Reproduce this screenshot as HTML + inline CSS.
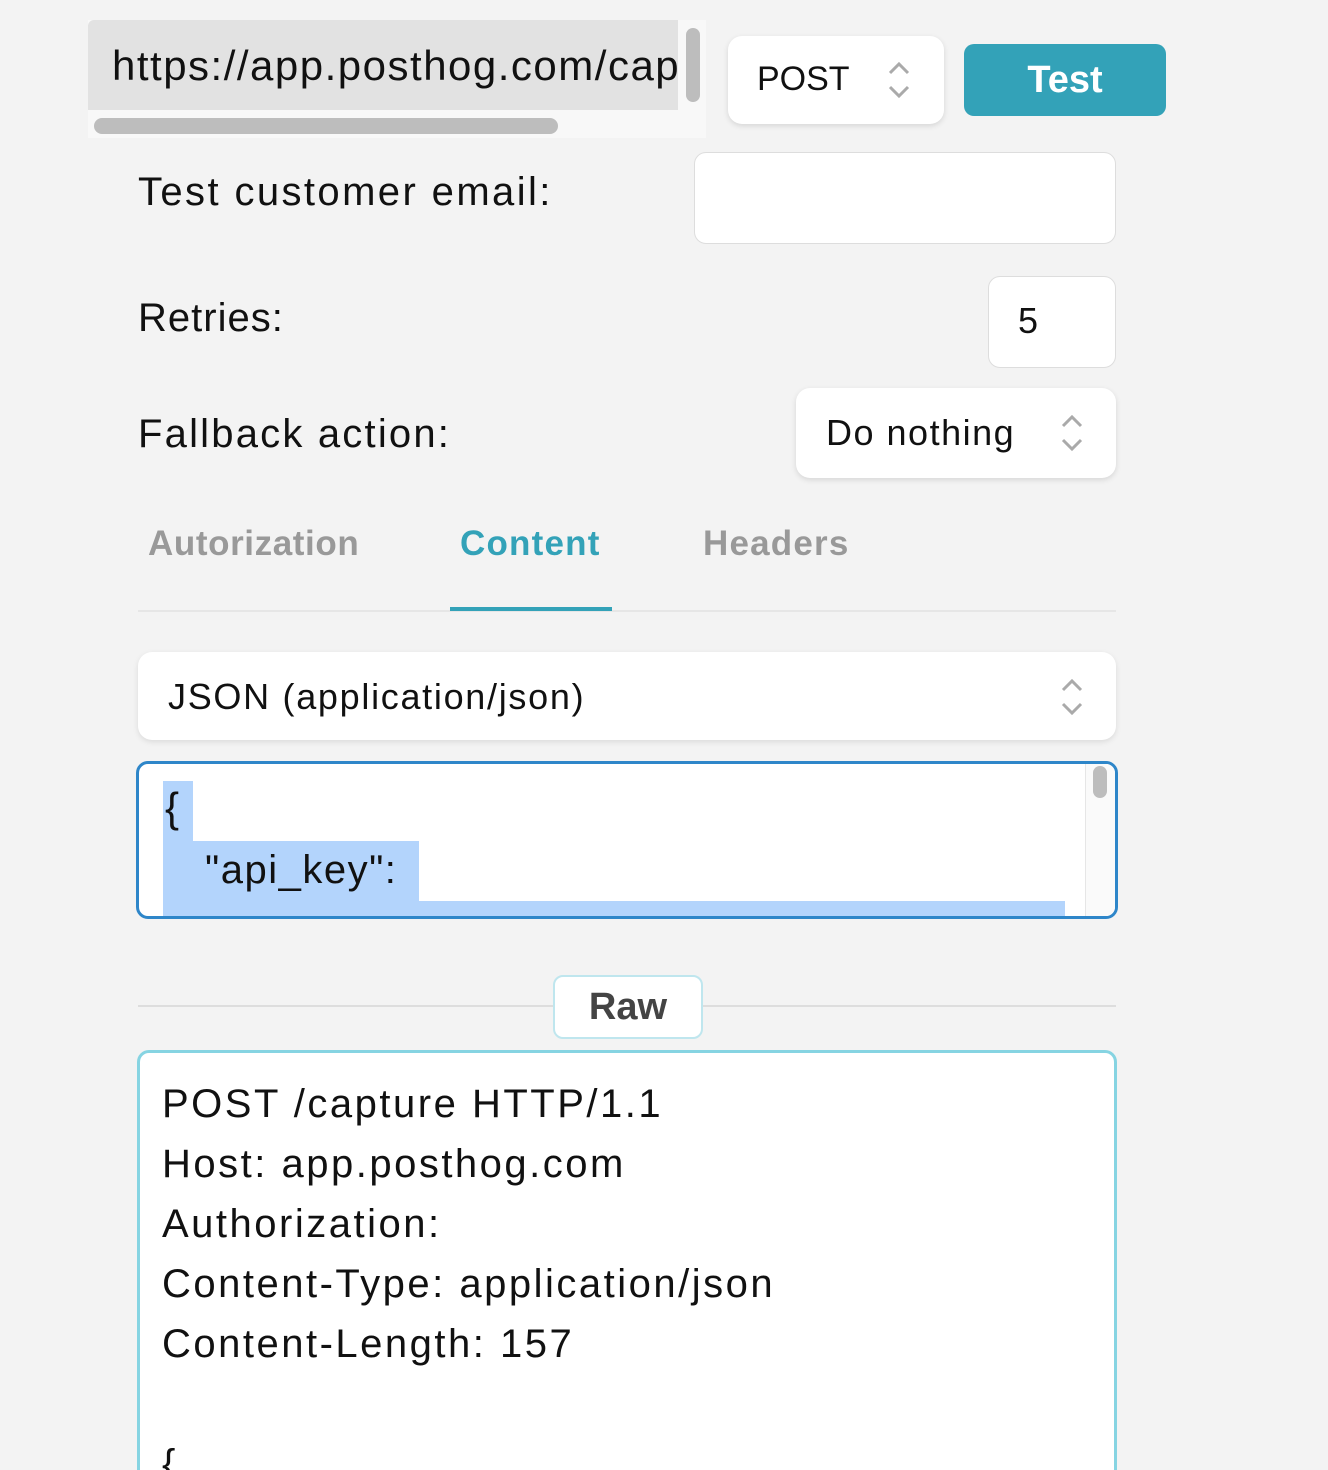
<!DOCTYPE html>
<html><head><style>
html,body{margin:0;width:1328px;height:1470px;overflow:hidden}
body{background:#f3f3f3;font-family:"Liberation Sans",sans-serif;position:relative;color:#111}
.a{position:absolute}
.box{position:absolute;background:#fff;border-radius:14px}
.chev{position:absolute;width:22px;height:40px}
</style></head><body>
<div class="a" style="left:88px;top:20px;width:618px;height:118px;background:#f8f8f8"></div>
<div class="a" style="left:88px;top:20px;width:590px;height:90px;background:#e2e2e2;border-radius:6px 0 0 0"></div>
<div class="a" style="left:112px;top:40px;width:566px;overflow:hidden;white-space:nowrap;font-size:42px;line-height:52px;letter-spacing:1.5px">https://app.posthog.com/capture</div>
<div class="a" style="left:686px;top:28px;width:14px;height:74px;background:#bdbdbd;border-radius:7px"></div>
<div class="a" style="left:94px;top:118px;width:464px;height:16px;background:#bdbdbd;border-radius:8px"></div>
<div class="box" style="left:728px;top:36px;width:216px;height:88px;box-shadow:0 2px 6px rgba(0,0,0,.12)"></div>
<div class="a" style="left:757px;top:60px;font-size:34px">POST</div>
<svg class="chev" style="left:888px;top:60px" viewBox="0 0 22 40" fill="none" stroke="#aaa" stroke-width="3"><path d="M2 13L11 4L20 13M2 27L11 36L20 27"/></svg>
<div class="a" style="left:964px;top:44px;width:202px;height:72px;background:#33a2b8;border-radius:10px;color:#fff;font-size:38px;font-weight:bold;text-align:center;line-height:72px">Test</div>
<div class="a" style="left:138px;top:170px;font-size:40px;letter-spacing:2.4px">Test customer email:</div>
<div class="box" style="left:694px;top:152px;width:420px;height:90px;border:1px solid #ddd;border-radius:12px"></div>
<div class="a" style="left:138px;top:296px;font-size:40px;letter-spacing:1px">Retries:</div>
<div class="box" style="left:988px;top:276px;width:126px;height:90px;border:1px solid #ddd;border-radius:12px"></div>
<div class="a" style="left:1018px;top:300px;font-size:36px">5</div>
<div class="a" style="left:138px;top:412px;font-size:40px;letter-spacing:2.2px">Fallback action:</div>
<div class="box" style="left:796px;top:388px;width:320px;height:90px;box-shadow:0 2px 6px rgba(0,0,0,.12)"></div>
<div class="a" style="left:826px;top:412px;font-size:36px;letter-spacing:1.5px">Do nothing</div>
<svg class="chev" style="left:1061px;top:413px" viewBox="0 0 22 40" fill="none" stroke="#aaa" stroke-width="3"><path d="M2 13L11 4L20 13M2 27L11 36L20 27"/></svg>
<div class="a" style="left:148px;top:524px;font-size:35px;color:#999;font-weight:bold;letter-spacing:.6px">Autorization</div>
<div class="a" style="left:460px;top:524px;font-size:35px;color:#33a2b8;font-weight:bold;letter-spacing:1.2px">Content</div>
<div class="a" style="left:703px;top:524px;font-size:35px;color:#999;font-weight:bold;letter-spacing:1.2px">Headers</div>
<div class="a" style="left:138px;top:610px;width:978px;height:2px;background:#e6e6e6"></div>
<div class="a" style="left:450px;top:607px;width:162px;height:4px;background:#33a2b8"></div>
<div class="box" style="left:138px;top:652px;width:978px;height:88px;box-shadow:0 2px 6px rgba(0,0,0,.1)"></div>
<div class="a" style="left:168px;top:676px;font-size:36px;letter-spacing:1.7px">JSON (application/json)</div>
<svg class="chev" style="left:1061px;top:677px" viewBox="0 0 22 40" fill="none" stroke="#aaa" stroke-width="3"><path d="M2 13L11 4L20 13M2 27L11 36L20 27"/></svg>
<div class="box" style="left:136px;top:761px;width:976px;height:152px;border:3px solid #2e86c9;border-radius:12px;overflow:hidden">
<div class="a" style="left:24px;top:17px;width:30px;height:60px;background:#b3d4fc"></div>
<div class="a" style="left:24px;top:77px;width:256px;height:60px;background:#b3d4fc"></div>
<div class="a" style="left:24px;top:137px;width:902px;height:30px;background:#b3d4fc"></div>
<div class="a" style="left:26px;top:20px;font-size:42px">{</div>
<div class="a" style="left:66px;top:84px;font-size:40px;letter-spacing:1.5px">"api_key":</div>
<div class="a" style="left:946px;top:0;width:30px;height:152px;background:#fafafa;border-left:1px solid #e6e6e6"></div>
<div class="a" style="left:954px;top:2px;width:14px;height:32px;background:#bdbdbd;border-radius:7px"></div>
</div>
<div class="a" style="left:138px;top:1005px;width:978px;height:2px;background:#ddd"></div>
<div class="a" style="left:553px;top:975px;width:146px;height:60px;background:#fff;border:2px solid #bfe6ee;border-radius:10px;font-size:38px;font-weight:bold;text-align:center;line-height:60px;color:#444">Raw</div>
<div class="box" style="left:137px;top:1050px;width:974px;height:450px;border:3px solid #86d4e2;border-radius:12px"></div>
<div class="a" style="left:162px;top:1074px;font-size:40px;line-height:60px;letter-spacing:2.5px">POST /capture HTTP/1.1<br>Host: app.posthog.com<br>Authorization:<br>Content-Type: application/json<br>Content-Length: 157<br><br>{</div>
</body></html>
